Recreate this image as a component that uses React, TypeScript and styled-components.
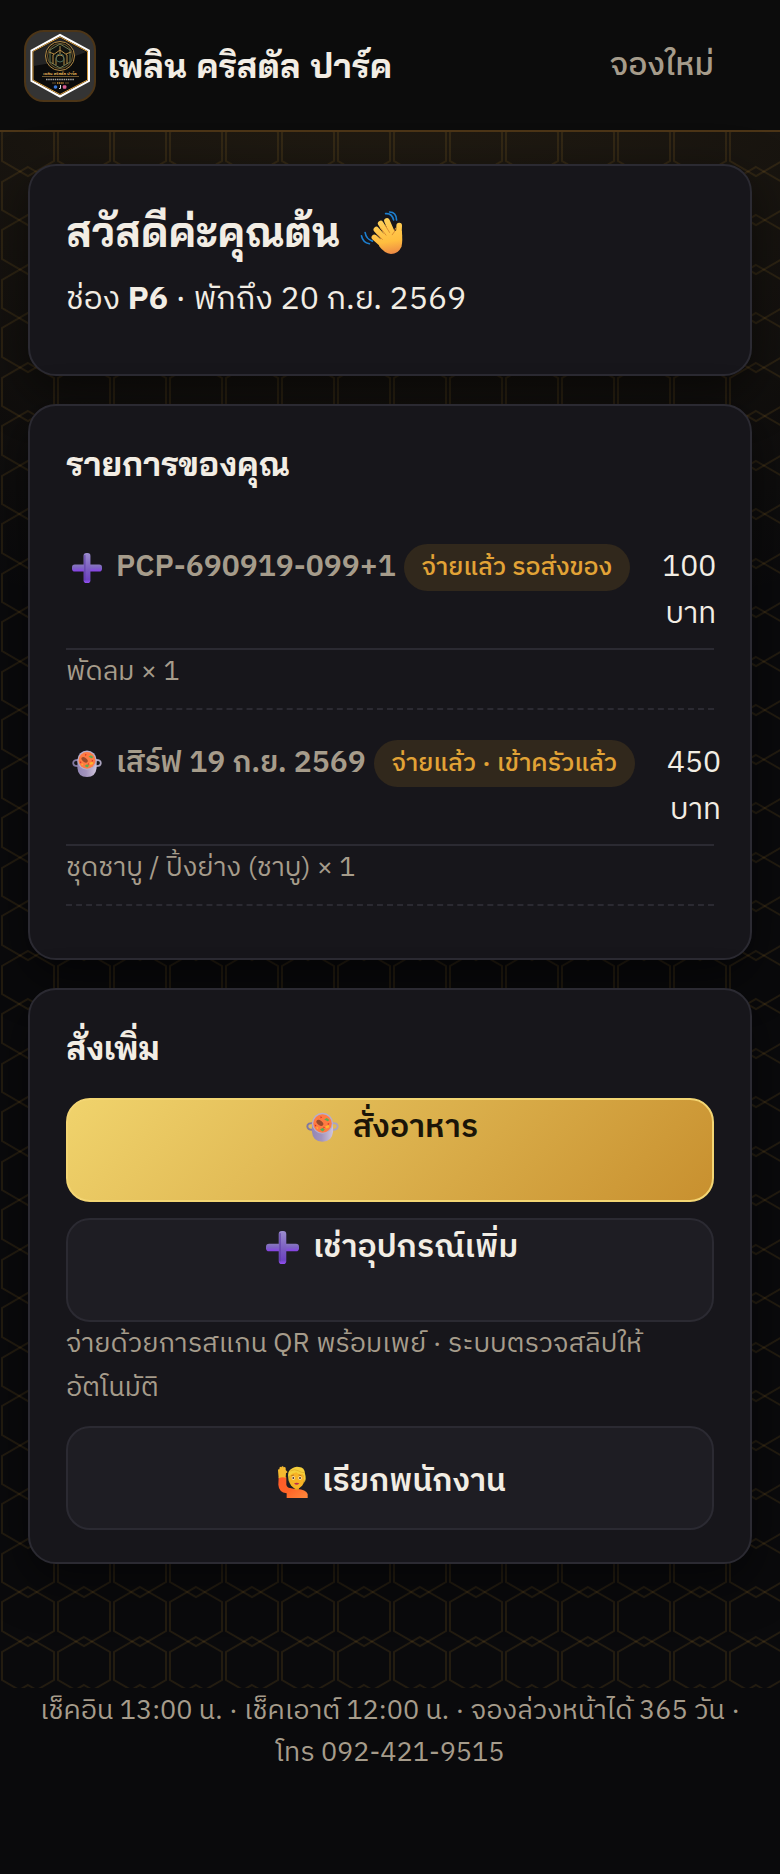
import React, { useId } from 'react';
import styled, { createGlobalStyle, css } from 'styled-components';

const color = {
  page: '#0a0a0c',
  card: '#17161b',
  raised: '#1e1d23',
  line: '#2b2a32',
  text: '#f2ede4',
  muted: '#a69c8b',
  gold: '#e2a336',
  goldDim: '#4c3517',
};

const honeycomb = encodeURIComponent(
  `<svg xmlns="http://www.w3.org/2000/svg" width="56" height="98" viewBox="0 0 56 98"><g fill="none" stroke="#c8912f" stroke-opacity=".13" stroke-width="2"><path d="M28 19L54 34V63L28 78L2 63V34Z"/><path d="M28 69L54 84V112L28 127L2 112V84Z"/><path d="M28 -29L54 -14V14L28 29L2 14V-14Z"/></g></svg>`,
);

const GlobalStyle = createGlobalStyle`
  *, *::before, *::after { box-sizing: border-box; }
  body {
    margin: 0;
    background: ${color.page};
    color: ${color.text};
    font: 400 32px/48px "IBM Plex Sans Thai", "Noto Sans Thai", "Noto Sans", sans-serif;
  }
  h1, h2, p, ul { margin: 0; padding: 0; }
`;

const Page = styled.div`
  position: relative;
  isolation: isolate;
`;

const Backdrop = styled.div`
  position: absolute;
  inset: 0 0 auto;
  height: 1688px;
  z-index: -1;
  background:
    url("data:image/svg+xml,${honeycomb}") 0 0 / 56px 98px,
    radial-gradient(130% 640px at 50% 0, rgba(212, 158, 60, 0.13), transparent);
`;

const Header = styled.header`
  display: flex;
  align-items: center;
  justify-content: space-between;
  padding: 30px 66px 28px 24px;
  border-bottom: 2px solid ${color.goldDim};
  background: #0c0c0c;
`;

const Brand = styled.a`
  display: flex;
  align-items: center;
  gap: 12px;
  color: ${color.text};
  font: 700 34px/48px "Bai Jamjuree", "Noto Sans Thai Looped", "Noto Sans", sans-serif;
  text-decoration: none;
`;

const NavLink = styled.a`
  color: ${color.muted};
  font-weight: 500;
  text-decoration: none;
`;

const Main = styled.main`
  display: flex;
  flex-direction: column;
  gap: 28px;
  padding: 32px 28px 0;
`;

const Card = styled.section`
  padding: 32px 36px;
  border: 2px solid ${color.line};
  border-radius: 28px;
  background: ${color.card};
  box-shadow: 0 16px 48px rgba(0, 0, 0, 0.5);
`;

const heading = css`
  font-family: "Bai Jamjuree", "Noto Sans Thai Looped", "Noto Sans", sans-serif;
  font-weight: 700;
`;

const Greeting = styled.h1`
  ${heading}
  display: flex;
  align-items: center;
  gap: 20px;
  font-size: 42px;
  line-height: 68px;
`;

const Stay = styled.p`
  padding: 8px 0 16px;
  line-height: 52px;
`;

const CardTitle = styled.h2`
  ${heading}
  font-size: 33px;
  line-height: 52px;
`;

const OrderList = styled.ul`
  padding: 40px 0 20px;
  list-style: none;
`;

const Order = styled.li`
  border-bottom: 2px dashed ${color.line};

  & + & {
    padding-top: 16px;
  }
`;

const OrderHead = styled.div`
  display: flex;
  align-items: flex-start;
  gap: 32px;
  padding: 14px 0 10px;
  border-bottom: 2px solid ${color.line};
  font-size: 30px;
  line-height: 47px;
`;

const OrderName = styled.div`
  display: flex;
  flex: none;
  align-items: center;
  gap: 8px;
  color: ${color.muted};
  font-weight: 600;
  white-space: nowrap;
`;

const OrderIcon = styled.span`
  display: flex;
  padding: 0 6px;
`;

const Pill = styled.span`
  padding: 0 18px;
  border-radius: 24px;
  background: #31281c;
  color: ${color.gold};
  font-size: 25px;
  font-weight: 500;
`;

const Price = styled.span`
  margin-left: auto;
  text-align: right;
`;

const Note = styled.p`
  color: ${color.muted};
  font-size: 27px;
  line-height: 44px;
`;

const OrderNote = styled(Note)`
  padding-bottom: 14px;
`;

const Actions = styled.div`
  display: flex;
  flex-direction: column;
  padding-top: 24px;
`;

const action = css`
  display: flex;
  justify-content: center;
  gap: 14px;
  width: 100%;
  height: 104px;
  padding: 4px 0 0 4px;
  border: 2px solid ${color.line};
  border-radius: 24px;
  background: ${color.raised};
  color: ${color.text};
  font: 600 32px/48px "IBM Plex Sans Thai", "Noto Sans Thai", "Noto Sans", sans-serif;
  text-decoration: none;

  svg {
    flex: none;
    margin-top: 7px;
  }
`;

const ActionLink = styled.a<{ $primary?: boolean }>`
  ${action}
  margin-bottom: ${(p) => (p.$primary ? 16 : 0)}px;
  ${(p) =>
    p.$primary &&
    css`
      border-color: #f3d573;
      background: linear-gradient(135deg, #f0d36c, #c8902f);
      color: #1b1508;
    `}
`;

const CallButton = styled.button`
  ${action}
  align-items: center;
  margin-top: 16px;
  padding-top: 8px;
  cursor: pointer;

  svg {
    margin: 0;
  }
`;

const Footer = styled.footer`
  padding: 126px 28px 88px;
  color: ${color.muted};
  font-size: 27px;
  line-height: 42px;
  text-align: center;
`;

function Logo() {
  return (
    <svg width="72" height="72" viewBox="0 0 72 72" aria-hidden="true">
      <rect x="1" y="1" width="70" height="70" rx="19" fill="#343434" stroke="#4c3517" strokeWidth="2" />
      <path d="M36 5L65 20.500V51L36 66.500L7.500 51V20.500Z" fill="#0b0b0b" stroke="#fff" strokeWidth="2" />
      <path d="M36 7L63.500 21.500V50L36 64.500L9 50V21.500Z" fill="none" stroke="#d3983b" strokeWidth="1" />
      <path d="M9.500 36C24 34 45 29 62 22L36 8L9.500 22Z" fill="#3a3a3a" opacity=".55" />
      <g fill="none" stroke="#b38a45" strokeWidth="1">
        <circle cx="36" cy="26" r="14.500" fill="#10120f" />
        <circle cx="36" cy="26" r="12.500" strokeWidth=".6" />
        <path d="M36 14l10 6v12l-10 6-10-6V20z" stroke="#6d7a55" />
        <path d="M29 34v-9l7-5 7 5v9M32 35v-6a4 4 0 0 1 8 0v6M36 16v8M25 22l5 2M47 22l-5 2" />
        <circle cx="36" cy="28" r="4" stroke="#47685a" />
      </g>
      <text x="36" y="45" textAnchor="middle" fontSize="4" fontWeight="700" fontFamily="'Bai Jamjuree', sans-serif" fill="#e0ad55">
        เพลิน คริสตัล ปาร์ค
      </text>
      <path d="M18 46.500H55M28 53H32M41 53H45" stroke="#b38a45" strokeWidth=".6" />
      <path d="M22 49.500H50" stroke="#a5a5a5" strokeWidth="1.500" strokeDasharray="1.500 .7" />
      <path d="M33 53H40" stroke="#d3983b" strokeWidth="1.500" strokeDasharray="1.200 .6" />
      <circle cx="31.500" cy="57" r="1.800" fill="#3b78d8" />
      <path d="M36.500 55v3.500h-1.500" stroke="#ddd" strokeWidth="1" fill="none" />
      <rect x="38.800" y="55.200" width="3.600" height="3.600" rx="1" fill="#d95e91" />
    </svg>
  );
}

function WaveIcon() {
  const id = useId();
  return (
    <svg width="43" height="43" viewBox="65 62 129 130" aria-hidden="true">
      <defs>
        <linearGradient id={id} gradientUnits="userSpaceOnUse" x1="140" y1="85" x2="158" y2="192">
          <stop offset="0" stopColor="#ffd15a" />
          <stop offset=".65" stopColor="#ffbe3f" />
          <stop offset="1" stopColor="#ee8a45" />
        </linearGradient>
      </defs>
      <g fill="none" stroke="#1c7fd0" strokeWidth="5" strokeLinecap="round">
        <path d="M69 137q4 20 24 24M80 127q3 20 22 26M142 70q19-2 24 19M154 65q20 0 21 24" />
      </g>
      <g stroke={`url(#${id})`} strokeWidth="17" strokeLinecap="round" fill="none">
        <path d="M108 142L142 172M183 106L181 150" />
        <path d="M114 118L148 156M127 100L158 148M146 92L168 142" />
      </g>
      <path d="M128 140L176 120L191 122Q194 152 190 170Q180 192 158 192Q138 190 122 168Z" fill={`url(#${id})`} />
      <path d="M118 134L132 148M127 114L143 135M141 106L154 127M172 114Q170 126 162 134" stroke="#dd8d32" strokeWidth="3" strokeLinecap="round" fill="none" />
    </svg>
  );
}

function PlusIcon({ size }: { size: number }) {
  const id = useId();
  return (
    <svg width={size} height={size} viewBox="0 0 96 96" aria-hidden="true">
      <defs>
        <linearGradient id={`${id}v`} x1="0" y1="0" x2="0" y2="1">
          <stop offset="0" stopColor="#9b8dce" />
          <stop offset=".55" stopColor="#7a5cc0" />
          <stop offset=".88" stopColor="#6d43c2" />
          <stop offset="1" stopColor="#9650f5" />
        </linearGradient>
        <linearGradient id={`${id}h`} x1="0" y1="0" x2="0" y2="1">
          <stop offset="0" stopColor="#8878bd" />
          <stop offset=".5" stopColor="#7d62c4" />
          <stop offset="1" stopColor="#8940e8" />
        </linearGradient>
      </defs>
      <rect y="37" width="96" height="22" rx="9" fill={`url(#${id}h)`} />
      <rect x="37" width="22" height="96" rx="9" fill={`url(#${id}v)`} />
      <path d="M41 8V86" stroke="#5e3ca6" strokeWidth="5" strokeLinecap="round" opacity=".6" />
    </svg>
  );
}

function PotIcon({ size }: { size: number }) {
  const id = useId();
  return (
    <svg width={size} height={size} viewBox="0 -4 100 98" aria-hidden="true">
      <defs>
        <linearGradient id={id} x1="0" y1="0" x2="1" y2="0">
          <stop offset="0" stopColor="#9387b5" />
          <stop offset=".45" stopColor="#a293bd" />
          <stop offset="1" stopColor="#d0c6dc" />
        </linearGradient>
      </defs>
      <path d="M24 32Q4 30 4 42Q5 53 22 52" fill="none" stroke="#8178a1" strokeWidth="6" />
      <path d="M77 32Q96 30 96 42Q95 53 78 52" fill="none" stroke="#aba3bf" strokeWidth="6" />
      <path d="M18 30V58Q20 88 50 88Q79 88 82 58V30Z" fill={`url(#${id})`} />
      <circle cx="50" cy="32" r="32" fill="#b8aecb" />
      <circle cx="50" cy="33" r="28" fill="#ff7b42" />
      <ellipse cx="42" cy="31" rx="12" ry="7" transform="rotate(38 42 31)" fill="#9a4a2b" />
      <path d="M55 21l8-5 8 6-5 4zM42 52l8-6 7 5-6 6z" fill="#5cad54" />
      <path d="M58 42l10-5 3 7-9 4zM30 45l7-1-1 6z" fill="#ffb52e" />
      <path d="M44 11l5 3-5 4zM66 31l5 3-5 4zM26 36l6 2-4 5zM54 42l3 4-5 2z" fill="#d92c25" />
    </svg>
  );
}

function HandRaisedIcon() {
  const id = useId();
  return (
    <svg width="30" height="32" viewBox="0 0 90 96" aria-hidden="true">
      <defs>
        <linearGradient id={id} x1="0" y1="0" x2="1" y2="1">
          <stop offset="0" stopColor="#ff5a2a" />
          <stop offset=".5" stopColor="#ff6427" />
          <stop offset="1" stopColor="#ff8a3d" />
        </linearGradient>
      </defs>
      <path d="M2 34Q13 30 25 34L25 56Q27 65 36 66Q48 69 57 69Q84 70 89 84V96H26V82Q2 78 1 56Z" fill={`url(#${id})`} />
      <path d="M2 37L0 13Q0 8 4 10L5 4Q8 1 10 4L12 1Q16-1 17 4L21 3Q24 5 23 12L28 17Q29 21 24 21L23 36Q14 31 2 37Z" fill="#f6b92f" />
      <path d="M50 60H63V70Q56 76 50 70Z" fill="#e89520" />
      <ellipse cx="56" cy="39" rx="23" ry="29" fill="#f7b325" />
      <path d="M31 37Q27 13 43 7Q52 0 63 3Q80 4 81 23Q86 38 79 50Q78 32 74 24Q62 27 55 19Q43 22 36 28Q34 34 35 50Q31 46 31 37Z" fill="#f5cf3c" />
      <path d="M37 15Q50 8 60 14T79 20" stroke="#d9a526" strokeWidth="2" fill="none" />
      <path d="M40 29l8-2M62 27l8 2" stroke="#b9741d" strokeWidth="3" />
      <circle cx="46" cy="36" r="5" fill="#fff3d0" />
      <circle cx="66" cy="36" r="5" fill="#fff3d0" />
      <circle cx="46" cy="36" r="3" fill="#5a351c" />
      <circle cx="66" cy="36" r="3" fill="#5a351c" />
      <path d="M48 52Q56 48 64 52Q56 61 48 52Z" fill="#bc2c50" />
    </svg>
  );
}

const orders = [
  { icon: <PlusIcon size={30} />, name: 'PCP-690919-099+1', status: 'จ่ายแล้ว รอส่งของ', price: 100, note: 'พัดลม × 1' },
  { icon: <PotIcon size={30} />, name: 'เสิร์ฟ 19 ก.ย. 2569', status: 'จ่ายแล้ว · เข้าครัวแล้ว', price: 450, note: 'ชุดชาบู / ปิ้งย่าง (ชาบู) × 1' },
];

export default function App() {
  return (
    <Page>
      <GlobalStyle />
      <Backdrop />
      <Header>
        <Brand href="#home">
          <Logo />
          เพลิน คริสตัล ปาร์ค
        </Brand>
        <nav>
          <NavLink href="#book">จองใหม่</NavLink>
        </nav>
      </Header>
      <Main>
        <Card>
          <Greeting>
            สวัสดีค่ะคุณต้น <WaveIcon />
          </Greeting>
          <Stay>
            ช่อง <b>P6</b> · พักถึง 20 ก.ย. 2569
          </Stay>
        </Card>
        <Card>
          <CardTitle>รายการของคุณ</CardTitle>
          <OrderList>
            {orders.map((o) => (
              <Order key={o.name}>
                <OrderHead>
                  <OrderName>
                    <OrderIcon>{o.icon}</OrderIcon>
                    {o.name}
                    <Pill>{o.status}</Pill>
                  </OrderName>
                  <Price>{o.price} บาท</Price>
                </OrderHead>
                <OrderNote>{o.note}</OrderNote>
              </Order>
            ))}
          </OrderList>
        </Card>
        <Card>
          <CardTitle>สั่งเพิ่ม</CardTitle>
          <Actions>
            <ActionLink href="#food" $primary>
              <PotIcon size={33} />
              สั่งอาหาร
            </ActionLink>
            <ActionLink href="#rent">
              <PlusIcon size={33} />
              เช่าอุปกรณ์เพิ่ม
            </ActionLink>
            <Note>จ่ายด้วยการสแกน QR พร้อมเพย์ · ระบบตรวจสลิปให้อัตโนมัติ</Note>
            <CallButton type="button">
              <HandRaisedIcon />
              เรียกพนักงาน
            </CallButton>
          </Actions>
        </Card>
      </Main>
      <Footer>เช็คอิน 13:00 น. · เช็คเอาต์ 12:00 น. · จองล่วงหน้าได้ 365 วัน · โทร 092-421-9515</Footer>
    </Page>
  );
}
